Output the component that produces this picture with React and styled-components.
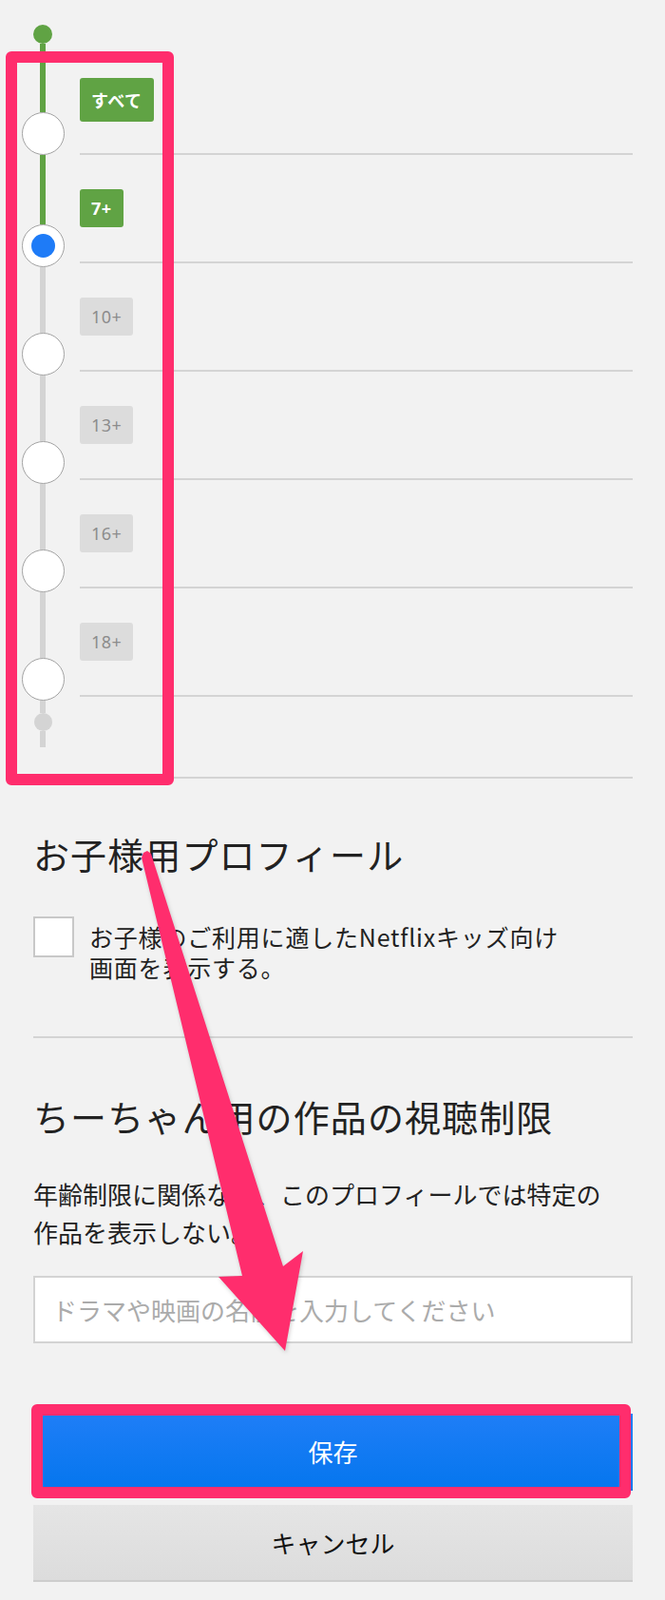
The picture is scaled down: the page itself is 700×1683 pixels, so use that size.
import React from "react";
import styled, { createGlobalStyle } from "styled-components";

const GlobalStyle = createGlobalStyle`
  html, body {
    margin: 0;
    padding: 0;
    background: #f2f2f2;
  }
  body {
    font-family: "Noto Sans CJK JP", "Noto Sans", sans-serif;
    color: #222;
  }
  * {
    box-sizing: border-box;
  }
`;

const Page = styled.div`
  position: relative;
  width: 700px;
  min-height: 1683px;
  background: #f2f2f2;
  padding-bottom: 19px;
`;

const Section = styled.section`
  padding: 0 34px 0 35px;
`;

// --- rating slider ---
const Slider = styled.div`
  display: flex;
  padding-right: 34px;
`;

const Track = styled.div`
  width: 90px;
  margin-right: -6px;
  padding-top: 26px;
  display: flex;
  flex-direction: column;
  align-items: center;
`;

const Segment = styled.div`
  width: 6px;
  height: ${(p) => p.$h}px;
  background: ${(p) => (p.$on ? "#60a344" : "#d4d4d4")};
`;

const Dot = styled.div`
  width: ${(p) => p.$size}px;
  height: ${(p) => p.$size}px;
  border-radius: 50%;
  background: ${(p) => (p.$on ? "#60a344" : "#d4d4d4")};
`;

const Thumb = styled.div`
  width: 45px;
  height: 45px;
  border-radius: 50%;
  background: #fff;
  border: 1.5px solid #a3a3a3;
  display: flex;
  align-items: center;
  justify-content: center;
  flex-shrink: 0;
`;

const ThumbDot = styled.span`
  width: 25px;
  height: 25px;
  border-radius: 50%;
  background: #1e7bf7;
`;

const Rows = styled.div`
  flex: 1;
  padding-top: 49px;
`;

const Row = styled.div`
  height: 114px;
  padding-top: ${(p) => (p.$tall ? 33 : 36)}px;
  border-bottom: 2px solid #d4d4d4;
`;

const Tag = styled.span`
  display: inline-flex;
  align-items: center;
  height: ${(p) => (p.$tall ? 46 : 40)}px;
  padding: 0 12px;
  border-radius: 3px;
  font-family: "Noto Sans", "Noto Sans CJK JP", sans-serif;
  font-size: 18px;
  letter-spacing: 0.5px;
  font-weight: ${(p) => (p.$on ? 700 : 400)};
  background: ${(p) => (p.$on ? "#60a344" : "#dcdcdc")};
  color: ${(p) => (p.$on ? "#fff" : "#8c8c8c")};
`;

const Divider = styled.hr`
  margin: ${(p) => p.$top}px 0 0;
  border: 0;
  height: 2px;
  background: #d4d4d4;
`;

const Heading = styled.h2`
  margin: ${(p) => p.$top}px 0 0;
  font-size: 38px;
  line-height: 46px;
  font-weight: 400;
  color: #222;
  letter-spacing: 1.1px;
`;

const CheckRow = styled.label`
  display: flex;
  align-items: flex-start;
  margin-top: 43px;
`;

const Box = styled.span`
  width: 43px;
  height: 43px;
  flex-shrink: 0;
  background: #fff;
  border: 2px solid #c8c8c8;
`;

const CheckText = styled.span`
  margin-left: 16px;
  padding-top: 5px;
  font-size: 25px;
  line-height: 32px;
  letter-spacing: 0.8px;
  color: #222;
`;

const Paragraph = styled.p`
  margin: 39px 0 0;
  font-size: 26px;
  line-height: 40px;
  color: #222;
`;

const Search = styled.input`
  display: block;
  width: 100%;
  height: 71px;
  margin-top: 26px;
  padding: 0 18px;
  border: 2px solid #d3d3d3;
  background: #fff;
  font-family: "Noto Sans CJK JP", sans-serif;
  font-size: 26px;
  color: #222;
  outline: none;
  &::placeholder {
    color: #ababab;
  }
`;

const Button = styled.button`
  display: block;
  width: 100%;
  height: 81px;
  margin-top: ${(p) => p.$top}px;
  border: 0;
  font-family: "Noto Sans CJK JP", sans-serif;
  font-size: 26px;
  cursor: pointer;
  background: ${(p) =>
    p.$primary
      ? "linear-gradient(#1f7ef7, #0576ee)"
      : "linear-gradient(#e5e5e5, #dcdcdc)"};
  color: ${(p) => (p.$primary ? "#fff" : "#111")};
  border-bottom: 2px solid ${(p) => (p.$primary ? "#0a6fe0" : "#cdcdcd")};
`;

// --- annotation overlays ---
const Highlight = styled.div`
  position: absolute;
  left: ${(p) => p.$x}px;
  top: ${(p) => p.$y}px;
  width: ${(p) => p.$w}px;
  height: ${(p) => p.$h}px;
  border: 12px solid #ff2d6d;
  border-radius: 6px;
  pointer-events: none;
`;

const Overlay = styled.svg`
  position: absolute;
  left: 0;
  top: 0;
  pointer-events: none;
  filter: drop-shadow(1px 2px 2px rgba(0, 0, 0, 0.18));
`;

const ratings = [
  { label: "すべて", thumbGap: 72 },
  { label: "7+", thumbGap: 73, selected: true },
  { label: "10+", thumbGap: 69 },
  { label: "13+", thumbGap: 69 },
  { label: "16+", thumbGap: 69 },
  { label: "18+", thumbGap: 69 },
];

const selectedIndex = ratings.findIndex((r) => r.selected);

export default function App() {
  return (
    <Page>
      <GlobalStyle />

      <Slider>
        <Track>
          <Dot $size={20} $on />
          {ratings.map((r, i) => (
            <React.Fragment key={r.label}>
              <Segment $h={r.thumbGap} $on={i <= selectedIndex} />
              <Thumb>{r.selected && <ThumbDot />}</Thumb>
            </React.Fragment>
          ))}
          <Segment $h={13} />
          <Dot $size={19} />
          <Segment $h={17} />
        </Track>
        <Rows>
          {ratings.map((r, i) => (
            <Row key={r.label} $tall={i === 0}>
              <Tag $on={i <= selectedIndex} $tall={i === 0}>
                {r.label}
              </Tag>
            </Row>
          ))}
        </Rows>
      </Slider>

      <Section>
        <Divider $top={31} />
        <Heading $top={56}>お子様用プロフィール</Heading>
        <CheckRow>
          <Box />
          <CheckText>
            お子様のご利用に適したNetflixキッズ向け
            <br />
            画面を表示する。
          </CheckText>
        </CheckRow>
        <Divider $top={57} />
        <Heading $top={59}>ちーちゃん用の作品の視聴制限</Heading>
        <Paragraph>
          年齢制限に関係なく、このプロフィールでは特定の
          <br />
          作品を表示しない。
        </Paragraph>
        <Search placeholder="ドラマや映画の名前を入力してください" />
        <Button $primary $top={74}>
          保存
        </Button>
        <Button $top={15}>キャンセル</Button>
      </Section>

      <Highlight $x={6} $y={54} $w={177} $h={772} />
      <Highlight $x={33} $y={1477} $w={631} $h={99} />
      <Overlay width="700" height="1683" viewBox="0 0 700 1683">
        <polygon
          fill="#ff2d6d"
          points="149,902 151,897 155,895 159,898 298,1332 319,1316 300,1421 230,1343 255,1342"
        />
      </Overlay>
    </Page>
  );
}
